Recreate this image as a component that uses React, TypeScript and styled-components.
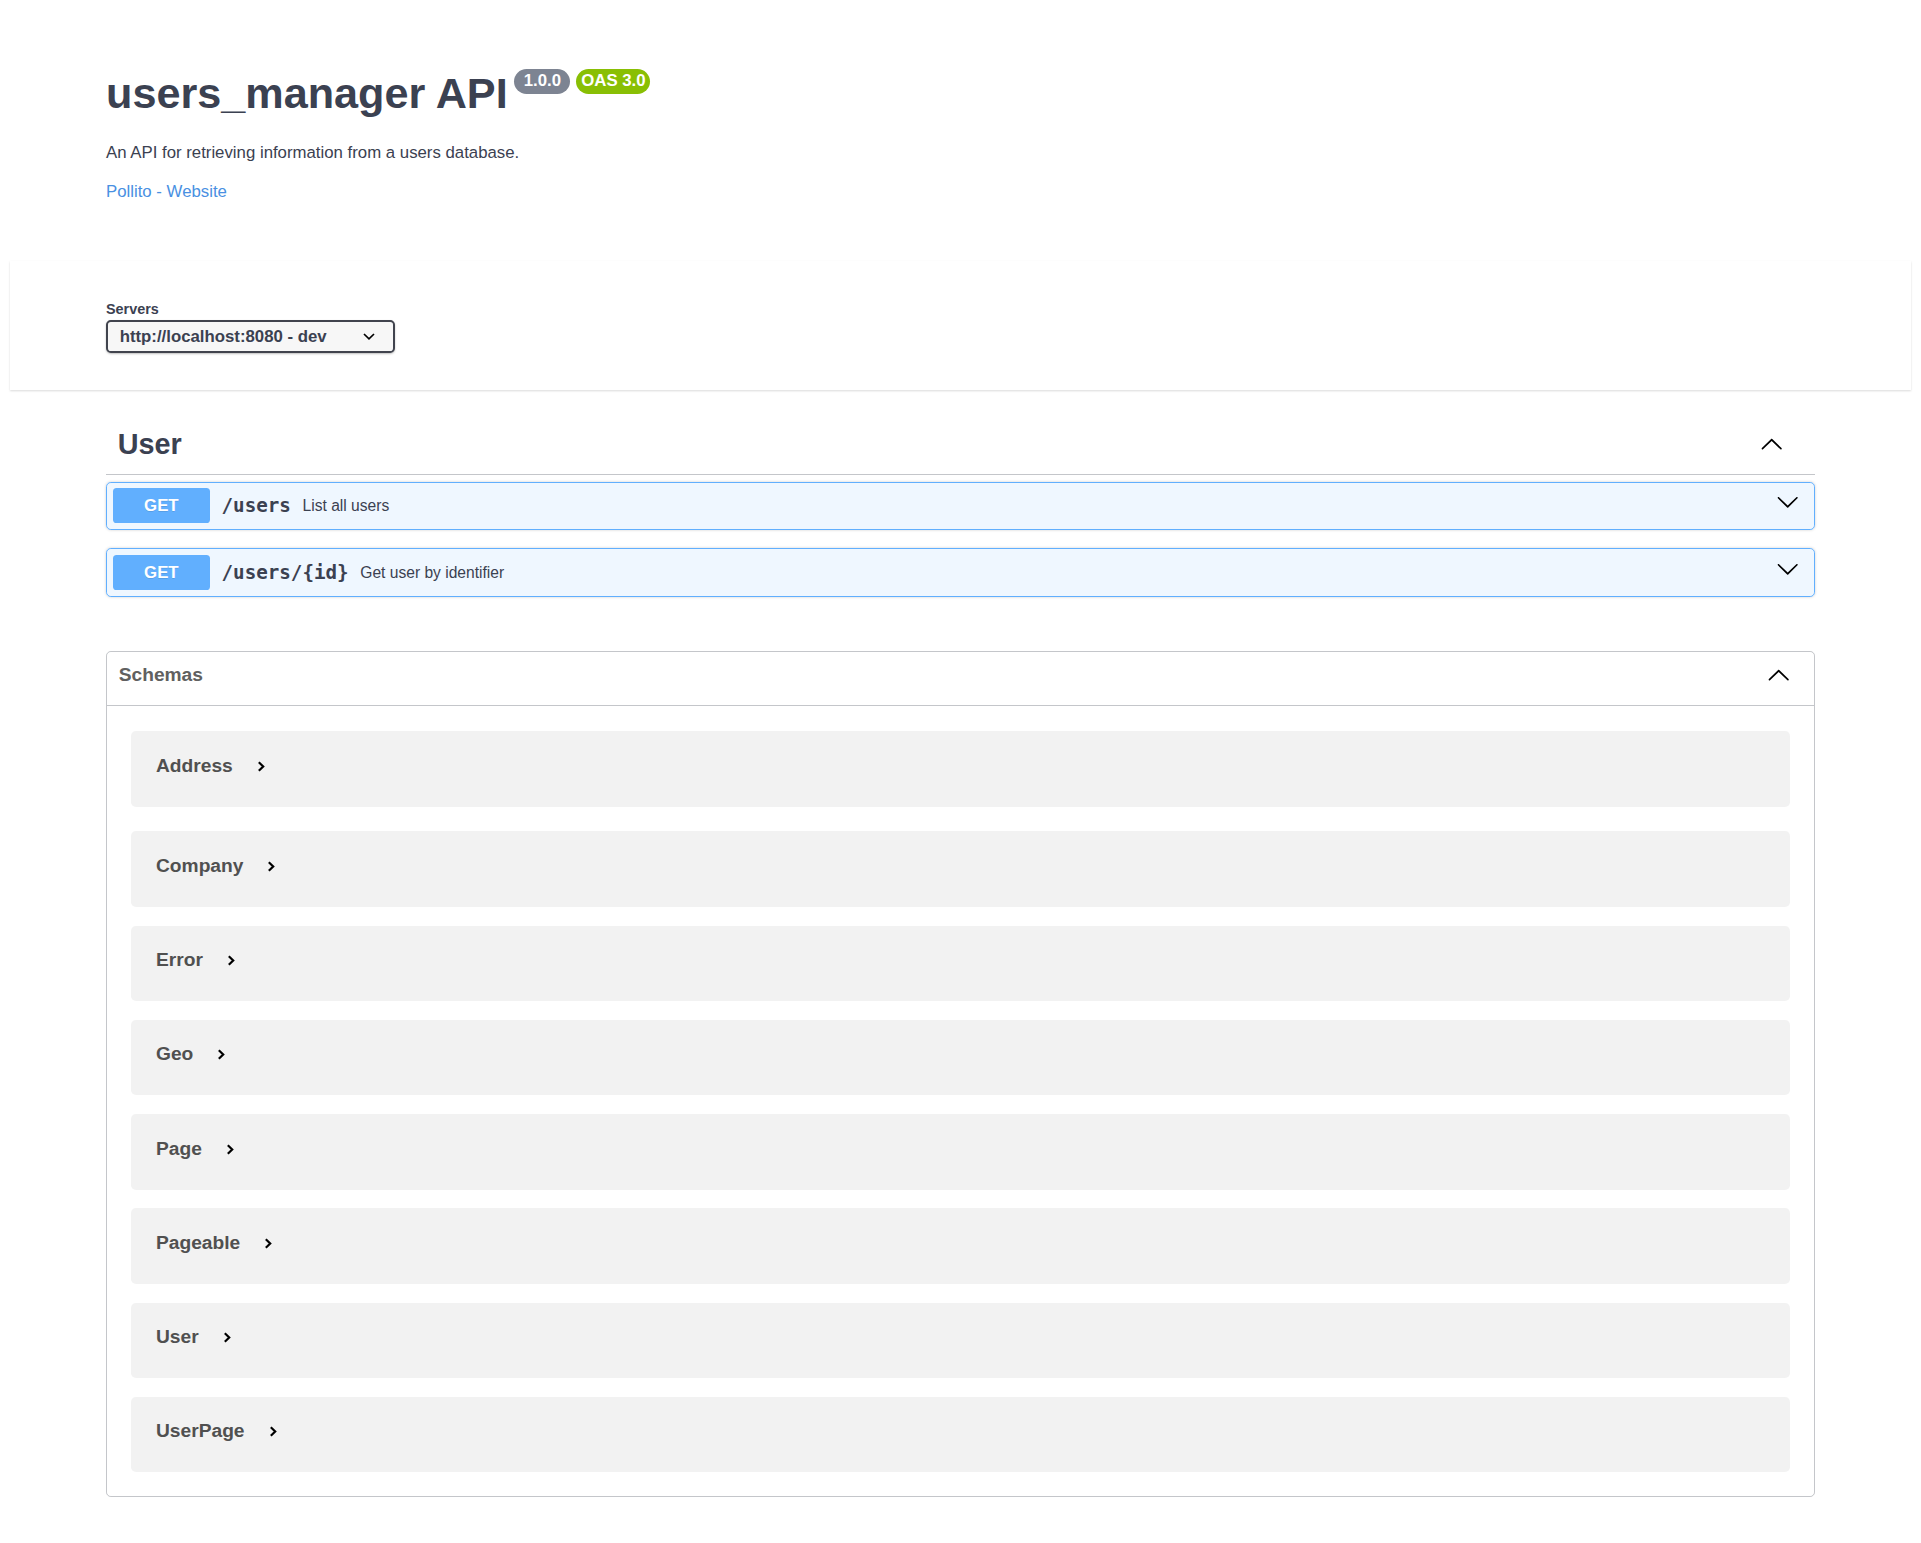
import styled, { createGlobalStyle } from 'styled-components'

const GlobalStyle = createGlobalStyle`
  * { box-sizing: border-box; }
  body {
    margin: 0;
    background: #fff;
    color: #3b4151;
    font-family: 'Liberation Sans', Arial, sans-serif;
  }
`

const operations = [
  { method: 'GET', path: '/users', summary: 'List all users' },
  { method: 'GET', path: '/users/{id}', summary: 'Get user by identifier' },
]

const schemas = ['Address', 'Company', 'Error', 'Geo', 'Page', 'Pageable', 'User', 'UserPage']

const arrowPath =
  'M17.418 6.109c.272-.268.709-.268.979 0s.271.701 0 .969l-7.908 7.83c-.27.268-.707.268-.979 0l-7.908-7.83c-.27-.268-.27-.701 0-.969.271-.268.709-.268.979 0L10 13.25l7.418-7.141z'

function Arrow({ up, className }: { up?: boolean; className?: string }) {
  return (
    <S.ArrowSvg className={className} $up={up} viewBox="0 0 20 20" aria-hidden="true">
      <path d={arrowPath} />
    </S.ArrowSvg>
  )
}

export default function App() {
  return (
    <>
      <GlobalStyle />
      <S.Page>
        <S.Wrapper>
          <S.Info>
            <S.Title>
              <span>users_manager API</span>
              <S.Badge $bg="#7d8492">{' 1.0.0 '}</S.Badge>
              <S.Badge $bg="#89bf04">OAS 3.0</S.Badge>
            </S.Title>
            <S.Description>An API for retrieving information from a users database.</S.Description>
            <S.InfoLink href="#">Pollito - Website</S.InfoLink>
          </S.Info>
        </S.Wrapper>

        <S.SchemeContainer>
          <S.Wrapper>
            <S.ServersLabel>Servers</S.ServersLabel>
            <S.Select>
              <span>http://localhost:8080 - dev</span>
              <svg width="12" height="7" viewBox="0 0 12 7" aria-hidden="true">
                <polyline points="1,1 6,5.8 11,1" fill="none" stroke="#000" strokeWidth="1.7" />
              </svg>
            </S.Select>
          </S.Wrapper>
        </S.SchemeContainer>

        <S.Wrapper>
          <S.TagHeader>
            <S.TagName>User</S.TagName>
            <Arrow up />
          </S.TagHeader>
          <S.OpList>
            {operations.map((op) => (
              <S.OpBlock key={op.path}>
                <S.Method>{op.method}</S.Method>
                <S.Path>{op.path}</S.Path>
                <S.Summary>{op.summary}</S.Summary>
                <S.OpArrow />
              </S.OpBlock>
            ))}
          </S.OpList>

          <S.Models>
            <S.ModelsHeader>
              <span>Schemas</span>
              <S.ModelsArrow up />
            </S.ModelsHeader>
            <S.ModelList>
              {schemas.map((name) => (
                <S.ModelItem key={name}>
                  <S.ModelName>{name}</S.ModelName>
                  <S.Chevron viewBox="0 0 8 11" aria-hidden="true">
                    <polyline points="1.8,1.3 6.2,5.5 1.8,9.7" fill="none" stroke="#000" strokeWidth="2.2" />
                  </S.Chevron>
                </S.ModelItem>
              ))}
            </S.ModelList>
          </S.Models>
        </S.Wrapper>
      </S.Page>
    </>
  )
}

const S = {
  Page: styled.div`
    padding: 0 10px 44px;
  `,
  Wrapper: styled.div`
    max-width: 1709px;
    margin: 0 auto;
  `,
  Info: styled.div`
    padding-top: 69px;
  `,
  Title: styled.h2`
    display: flex;
    align-items: flex-start;
    margin: 0;
    font-size: 43.2px;
    line-height: 48px;
    font-weight: 700;
    color: #3b4151;
  `,
  Badge: styled.small<{ $bg: string }>`
    display: inline-flex;
    align-items: center;
    height: 24.5px;
    margin-left: 6px;
    padding: 0 4.8px;
    border-radius: 57px;
    background: ${(p) => p.$bg};
    color: #fff;
    font-size: 16.8px;
    font-weight: 700;
    white-space: pre;
    &:first-of-type {
      margin-left: 6.5px;
    }
  `,
  Description: styled.p`
    margin: 25.7px 0 0;
    font-size: 16.8px;
    line-height: 19px;
    color: #3b4151;
  `,
  InfoLink: styled.a`
    display: block;
    margin-top: 19.9px;
    font-size: 16.8px;
    line-height: 19px;
    color: #4990e2;
    text-decoration: none;
  `,
  SchemeContainer: styled.div`
    margin-top: 60.9px;
    padding: 39.4px 0 37px;
    background: #fff;
    box-shadow: 0 1px 2px 0 rgba(0, 0, 0, 0.15);
  `,
  ServersLabel: styled.div`
    font-size: 14.4px;
    line-height: 16px;
    font-weight: 700;
    color: #3b4151;
  `,
  Select: styled.div`
    display: flex;
    align-items: center;
    justify-content: space-between;
    width: 289px;
    height: 33px;
    margin-top: 3.6px;
    padding: 0 18px 0 11.7px;
    border: 2px solid #41444e;
    border-radius: 4.8px;
    background: #f7f7f7;
    box-shadow: 0 1px 2px 0 rgba(0, 0, 0, 0.25);
    font-size: 16.8px;
    font-weight: 700;
    color: #3b4151;
  `,
  TagHeader: styled.div`
    display: flex;
    align-items: center;
    justify-content: space-between;
    height: 60px;
    margin-top: 24.8px;
    padding: 0 32px 1px 11.7px;
    border-bottom: 1px solid rgba(59, 65, 81, 0.3);
  `,
  TagName: styled.h3`
    margin: 0;
    font-size: 28.8px;
    line-height: 32px;
    font-weight: 700;
    color: #3b4151;
  `,
  ArrowSvg: styled.svg<{ $up?: boolean }>`
    flex: none;
    width: 23.4px;
    height: 23.4px;
    fill: #000;
    transform: ${(p) => (p.$up ? 'rotate(180deg)' : 'none')};
  `,
  OpList: styled.div`
    display: flex;
    flex-direction: column;
    gap: 18.3px;
    margin-top: 6.4px;
  `,
  OpBlock: styled.div`
    display: flex;
    align-items: center;
    height: 48.5px;
    padding: 0 5.85px;
    border: 1px solid #61affe;
    border-radius: 4.8px;
    background: rgba(97, 175, 254, 0.1);
    box-shadow: 0 0 3px rgba(0, 0, 0, 0.19);
  `,
  Method: styled.span`
    display: flex;
    align-items: center;
    justify-content: center;
    width: 97px;
    height: 35px;
    border-radius: 3.6px;
    background: #61affe;
    color: #fff;
    font-size: 16.8px;
    font-weight: 700;
    text-shadow: 0 1px 0 rgba(0, 0, 0, 0.1);
  `,
  Path: styled.span`
    padding: 0 11.7px;
    font-family: 'DejaVu Sans Mono', monospace;
    font-size: 19.2px;
    font-weight: 700;
    color: #3b4151;
  `,
  Summary: styled.span`
    flex: 1;
    font-size: 15.6px;
    color: #3b4151;
  `,
  OpArrow: styled(Arrow)`
    margin: 0 8.3px 7.6px 0;
  `,
  Models: styled.section`
    margin-top: 54.2px;
    border: 1px solid rgba(59, 65, 81, 0.3);
    border-radius: 4.8px;
  `,
  ModelsHeader: styled.h4`
    display: flex;
    align-items: flex-start;
    justify-content: space-between;
    height: 54px;
    margin: 0;
    padding: 12px 24px 0 11.7px;
    border-bottom: 1px solid rgba(59, 65, 81, 0.3);
    font-size: 19.2px;
    line-height: 22px;
    font-weight: 700;
    color: #606060;
  `,
  ModelsArrow: styled(Arrow)`
    margin-top: 0.2px;
  `,
  ModelList: styled.div`
    padding: 25.3px 24px 5.25px;
  `,
  ModelItem: styled.div`
    display: flex;
    align-items: flex-start;
    height: 75.5px;
    margin-bottom: 18.75px;
    padding: 23.5px 25px 0;
    border-radius: 4.8px;
    background: rgba(0, 0, 0, 0.05);
    &:first-child {
      margin-bottom: 24.5px;
    }
  `,
  ModelName: styled.span`
    font-size: 19.2px;
    line-height: 21.5px;
    font-weight: 700;
    color: #505050;
  `,
  Chevron: styled.svg`
    flex: none;
    width: 8px;
    height: 11px;
    margin: 6px 0 0 24px;
  `,
}
